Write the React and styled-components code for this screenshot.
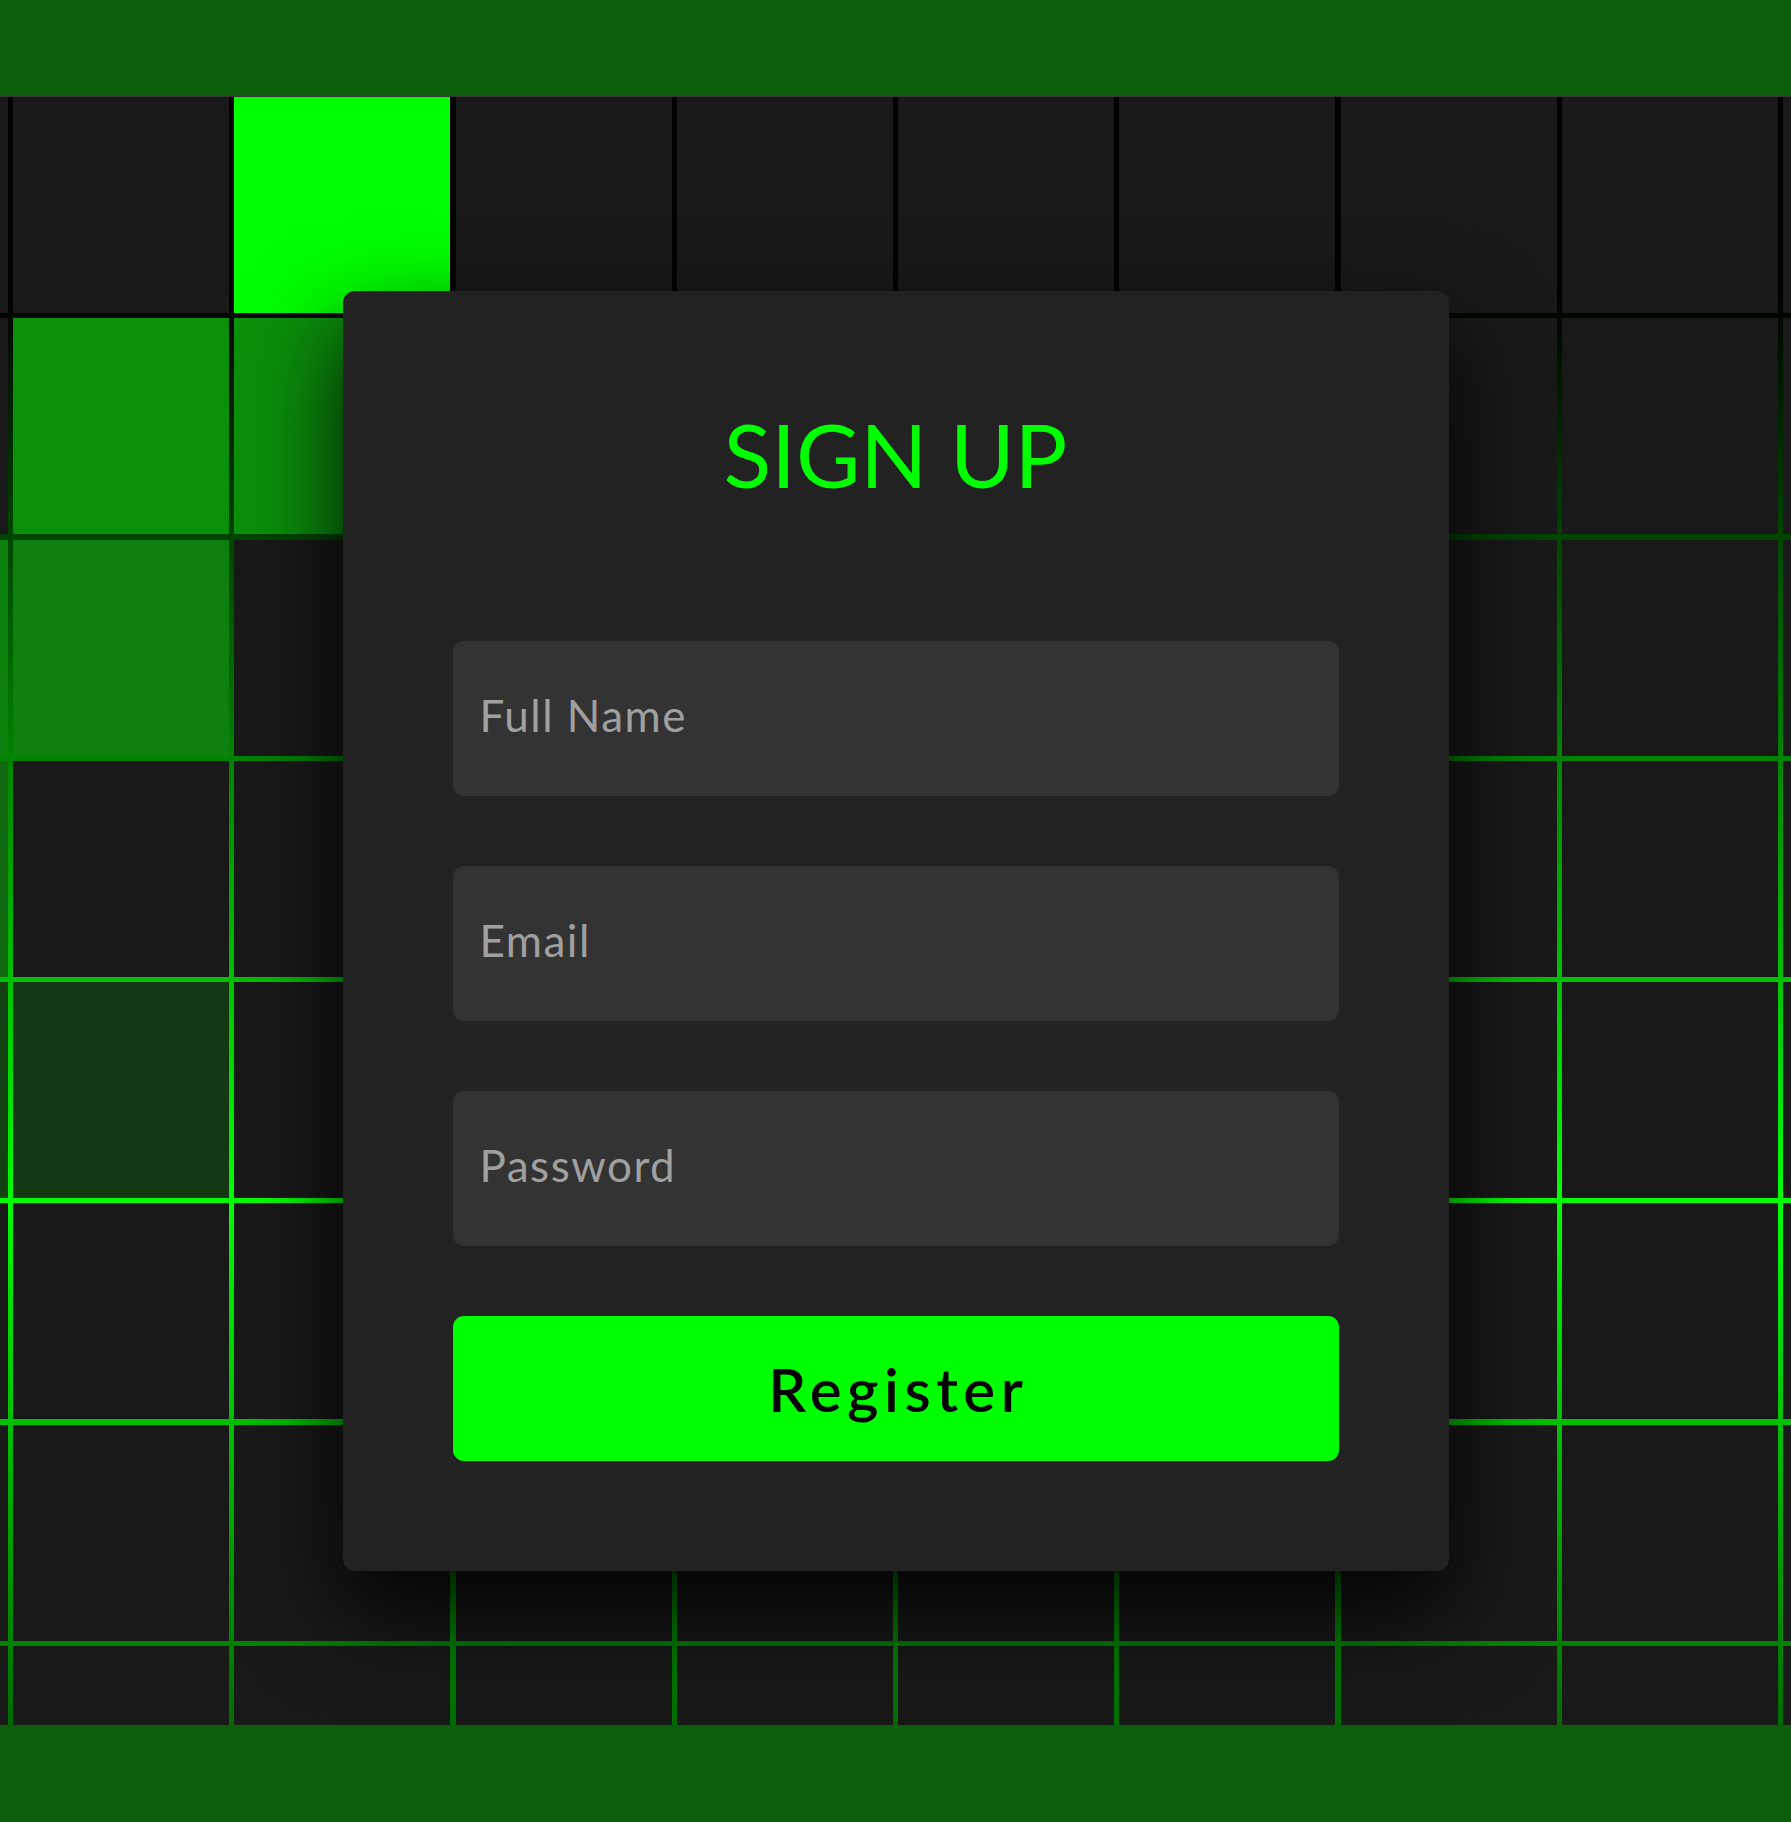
import React from 'react'
import styled, { createGlobalStyle } from 'styled-components'

const GlobalStyle = createGlobalStyle`
  * { box-sizing: border-box; }
  html, body {
    margin: 0;
    padding: 0;
    background: #0b5d0b;
    font-family: 'Lato', 'Noto Sans', sans-serif;
  }
`

const COLS = 10
const ROWS = 8

// cells still glowing from the hover trail: "row-col" -> colour
const trail = {
  '0-2': '#00ff00',
  '1-1': '#0b900b',
  '1-2': '#0b900b',
  '2-0': '#0c810c',
  '2-1': '#0d800d',
  '3-0': '#106a10',
  '4-0': '#134213',
  '4-1': '#143814'
}

const Page = styled.div`
  min-height: 1822px;
  padding: 96px 0 97px;
`

const Stage = styled.section`
  position: relative;
  height: 1629px;
  overflow: hidden;
  border-top: 1px solid #383838;
  background: linear-gradient(
    180deg,
    #000 0px,
    #000 193px,
    #00ff00 1103px,
    #000 2013px
  );
`

const Grid = styled.div`
  display: grid;
  grid-template-columns: repeat(${COLS}, 216px);
  grid-auto-rows: 216px;
  gap: 5.3px;
  justify-content: center;
`

const Cell = styled.span`
  display: block;
  background: ${props => props.$tone || '#191919'};
`

const Card = styled.div`
  position: absolute;
  top: 194px;
  left: 50%;
  transform: translateX(-50%);
  width: 1106px;
  padding: 110px;
  background: #222;
  border-radius: 12px;
  box-shadow: 0 41px 97px rgba(0, 0, 0, 0.9);
  z-index: 10;
`

const Title = styled.h2`
  margin: 9px 0 143px;
  font-family: 'Lato', 'Noto Sans', sans-serif;
  font-size: 88px;
  font-weight: 400;
  line-height: 88px;
  color: #00ff00;
  text-align: center;
  text-transform: uppercase;
`

const Form = styled.form`
  display: flex;
  flex-direction: column;
  gap: 70px;
`

const Field = styled.input`
  width: 100%;
  height: 155px;
  padding: 0 27px 7px;
  border: none;
  outline: none;
  border-radius: 11px;
  background: #333;
  color: #fff;
  font-family: 'Lato', 'Noto Sans', sans-serif;
  font-size: 44px;
  letter-spacing: 1.5px;
  &::placeholder {
    color: #a0a0a0;
  }
`

const SubmitButton = styled.button`
  width: 100%;
  height: 145px;
  border: none;
  border-radius: 11px;
  background: #00ff00;
  color: #000;
  font-family: 'Lato', 'Noto Sans', sans-serif;
  font-size: 60px;
  font-weight: 600;
  letter-spacing: 5.5px;
  text-indent: 5.5px;
  cursor: pointer;
`

export default function App() {
  const cells = []
  for (let r = 0; r < ROWS; r++) {
    for (let c = 0; c < COLS; c++) {
      cells.push(<Cell key={r + '-' + c} $tone={trail[r + '-' + c]} />)
    }
  }

  return (
    <Page>
      <GlobalStyle />
      <Stage>
        <Grid>{cells}</Grid>
        <Card>
          <Title>Sign Up</Title>
          <Form onSubmit={e => e.preventDefault()}>
            <Field type="text" placeholder="Full Name" />
            <Field type="email" placeholder="Email" />
            <Field type="password" placeholder="Password" />
            <SubmitButton type="submit">Register</SubmitButton>
          </Form>
        </Card>
      </Stage>
    </Page>
  )
}
